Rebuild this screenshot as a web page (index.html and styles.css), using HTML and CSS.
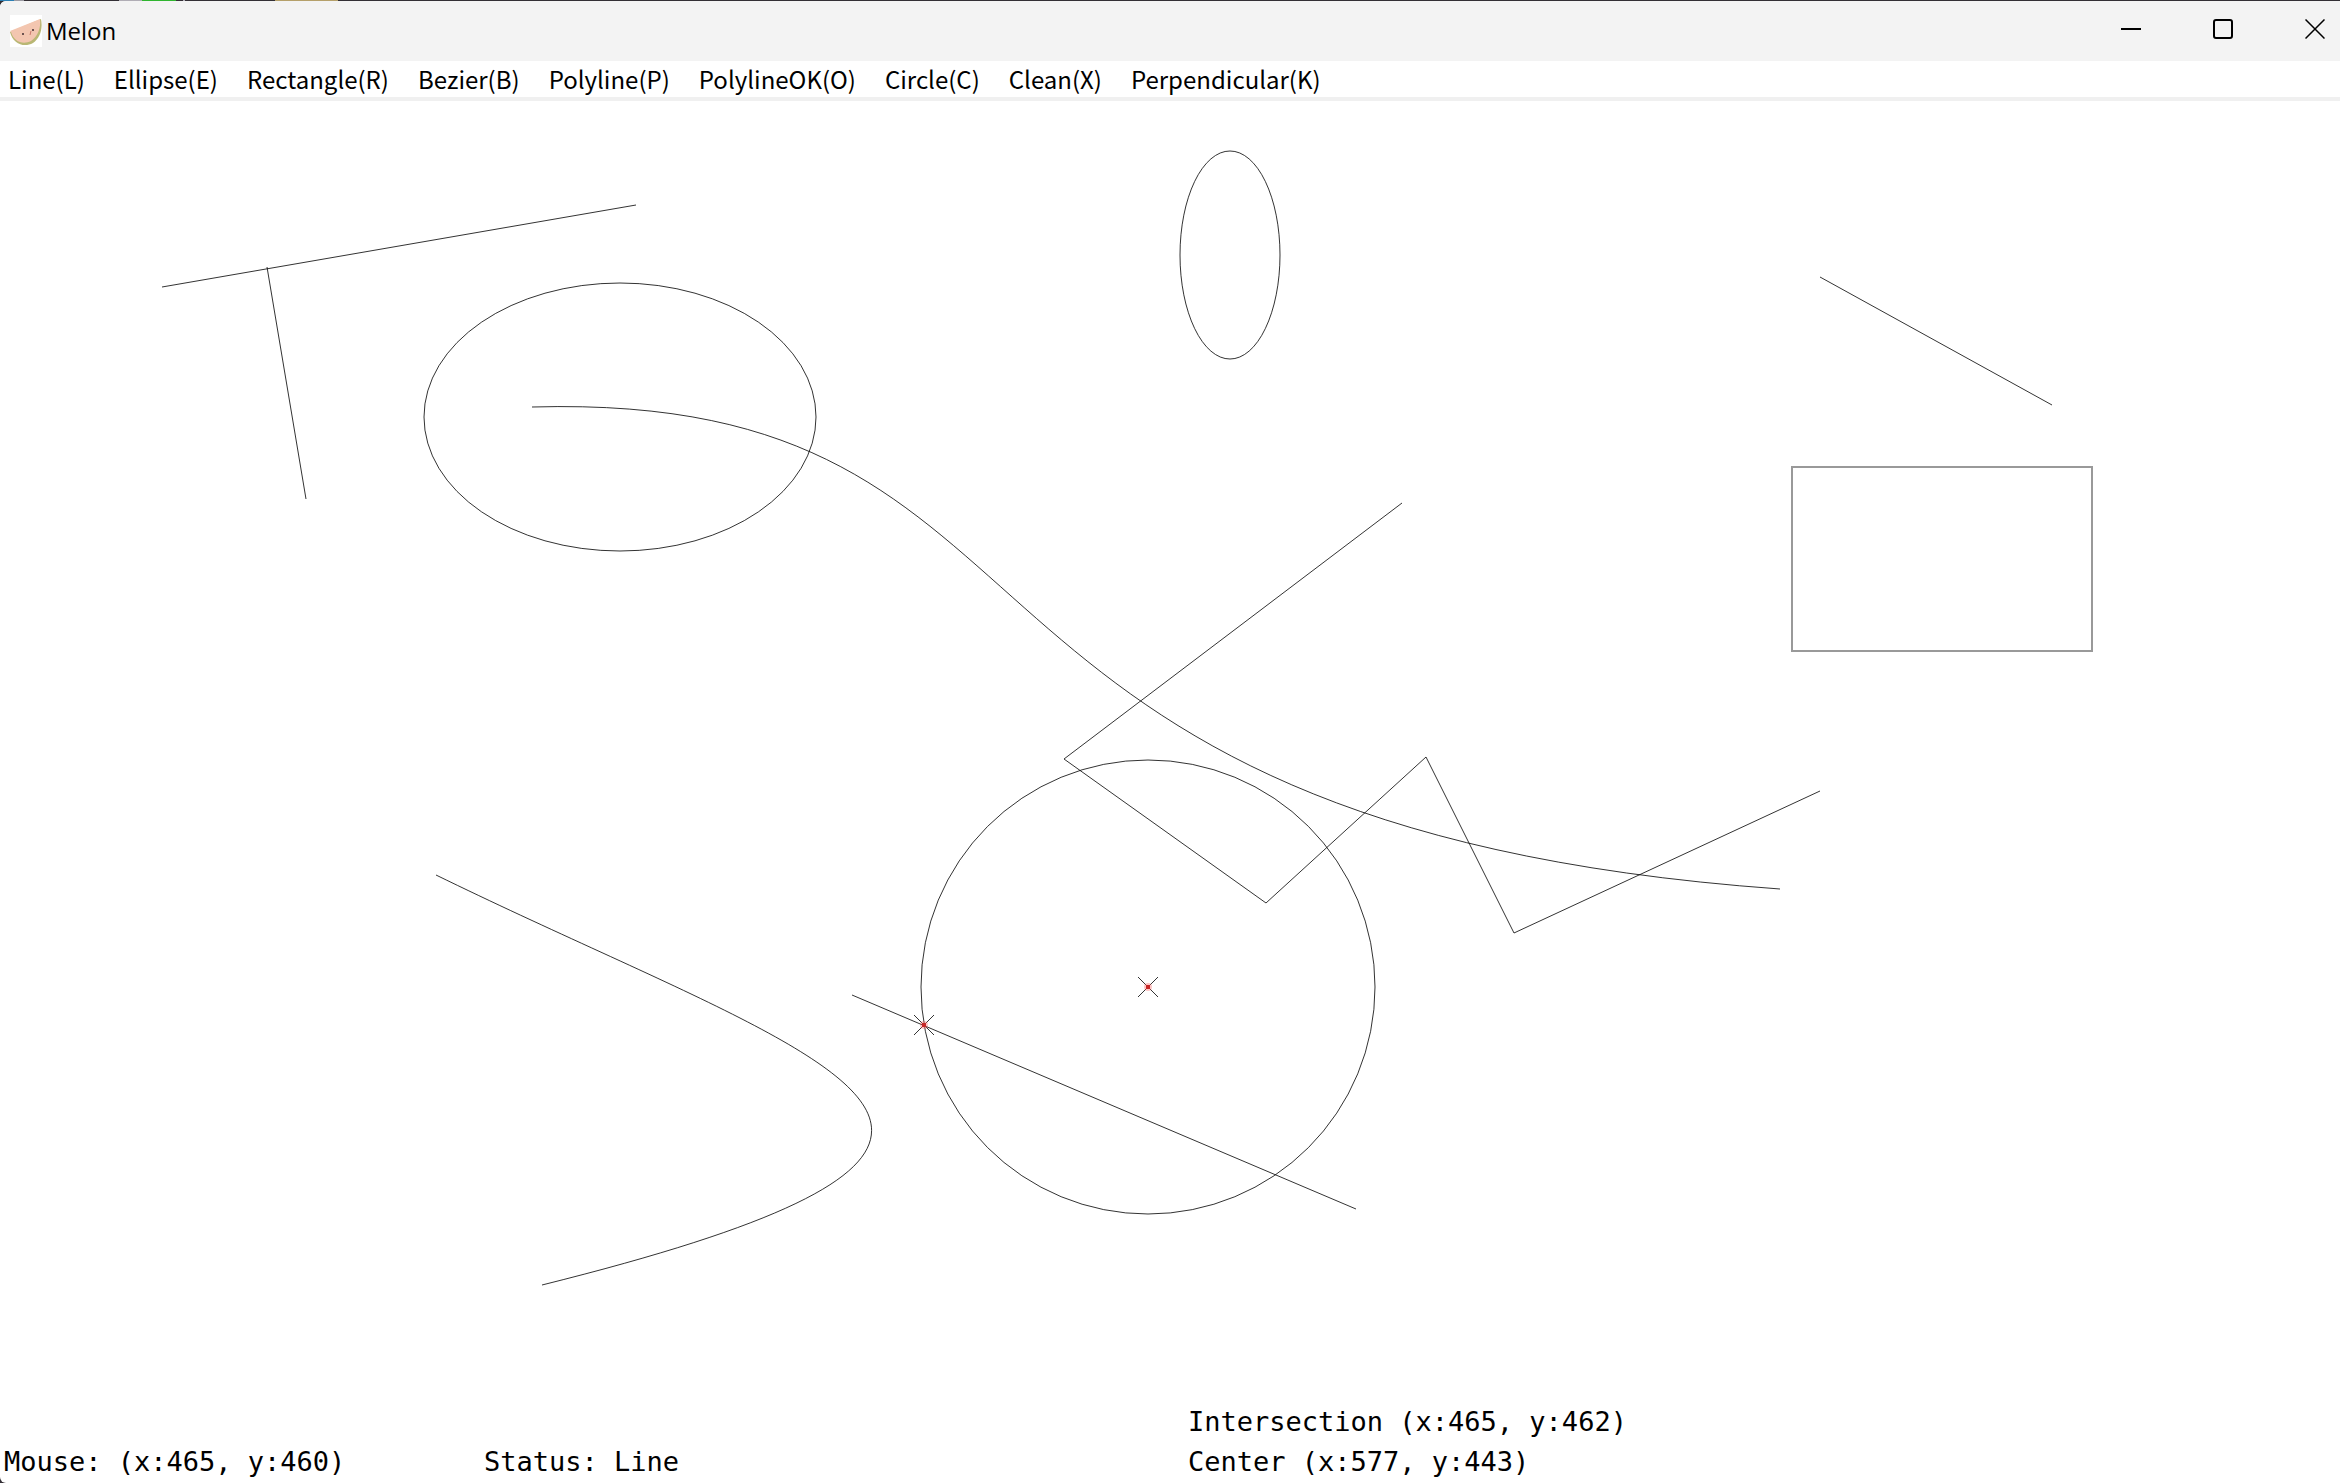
FILE: index.html
```html
<!DOCTYPE html>
<html lang="en">
<head>
<meta charset="utf-8">
<title>Melon</title>
<link rel="stylesheet" href="styles.css">
</head>
<body>
<div class="desktop-edge"></div>
<div class="window">
  <header class="titlebar">
    <svg class="app-icon" viewBox="0 0 32 32" aria-hidden="true">
      <rect width="32" height="32" fill="#fff"/>
      <path d="M0 17 L31 4 C33 14 30 23 23 28 C14 33 3 29 0 17Z" fill="#b9b774"/>
      <path d="M0 16 L30 4 C31 13 28 21 21 26 C13 30 4 27 1 17Z" fill="#f3c6b0"/>
      <path d="M12 18h2v2h-2zM22 14h2v2h-2z" fill="#6d5350"/>
      <path d="M20 20l1-4" stroke="#c9786b" fill="none"/>
    </svg>
    <h1 class="title">Melon</h1>
    <div class="controls">
      <button class="control" type="button" aria-label="Minimize"><svg viewBox="0 0 20 20"><path d="M0 10h20" stroke-width="2"/></svg></button>
      <button class="control" type="button" aria-label="Maximize"><svg viewBox="0 0 20 20"><rect x="1" y="1" width="18" height="18" rx="2" stroke-width="2"/></svg></button>
      <button class="control" type="button" aria-label="Close"><svg viewBox="0 0 20 20"><path d="M0.500 0.500l19 19M19.500 0.500l-19 19" stroke-width="1.500"/></svg></button>
    </div>
  </header>
  <nav class="menu" aria-label="Tools">
    <button class="menu-item" type="button">Line(L)</button>
    <button class="menu-item" type="button">Ellipse(E)</button>
    <button class="menu-item" type="button">Rectangle(R)</button>
    <button class="menu-item" type="button">Bezier(B)</button>
    <button class="menu-item" type="button">Polyline(P)</button>
    <button class="menu-item" type="button">PolylineOK(O)</button>
    <button class="menu-item" type="button">Circle(C)</button>
    <button class="menu-item" type="button">Clean(X)</button>
    <button class="menu-item" type="button">Perpendicular(K)</button>
  </nav>
  <main class="stage">
    <svg class="drawing" viewBox="0 101 2340 1301" role="img" aria-label="Drawing">
      <g class="shapes">
        <path d="M162 287L636 205"/>
        <path d="M267 267L306 499"/>
        <ellipse cx="620" cy="417" rx="196" ry="134"/>
        <ellipse cx="1230" cy="255" rx="50" ry="104"/>
        <path d="M1820 277L2052 405"/>
        <rect class="box" x="1792" y="467" width="300" height="184"/>
        <path d="M532 407C1096 391 897 826 1780 889"/>
        <path d="M1402 503L1064 759L1266 903L1426 757L1514 933L1820 791"/>
        <circle cx="1148" cy="987" r="227"/>
        <path d="M852 995L1356 1209"/>
        <path d="M436 875C819 1062 1136 1137 542 1285"/>
      </g>
      <g class="mark">
        <path d="M1138 977l20 20M1158 977l-20 20"/>
        <circle class="halo" cx="1148" cy="987" r="4"/>
        <rect x="1146" y="985" width="4" height="4"/>
      </g>
      <g class="mark">
        <path d="M914 1015l20 20M934 1015l-20 20"/>
        <circle class="halo" cx="924" cy="1025" r="4"/>
        <rect x="922" y="1023" width="4" height="4"/>
      </g>
    </svg>
  </main>
  <footer class="status">
    <output class="readout">Mouse: (x:465, y:460)</output>
    <output class="readout">Status: Line</output>
    <output class="readout">Intersection (x:465, y:462)<br>Center (x:577, y:443)</output>
  </footer>
</div>
</body>
</html>
```
FILE: styles.css
```css
* {
  box-sizing: border-box;
}

body {
  margin: 0;
  min-height: 100vh;
  display: flex;
  flex-direction: column;
  background: #332f35;
  color: #000;
  font-family: "Noto Sans CJK SC", "Noto Sans", sans-serif;
}

/* Sliver of the desktop that shows above the window */
.desktop-edge {
  height: 1px;
  background: linear-gradient(90deg,
    #2b7fb3 0 14px, #9a9aa2 14px 24px, #332f35 24px 119px,
    #b0adb5 119px 142px, #2fb52f 142px 176px, #332f35 176px 183px,
    #b0adb5 183px 185px, #332f35 185px 275px, #b5a06a 275px 338px,
    #332f35 338px);
}

.window {
  flex: 1;
  display: flex;
  flex-direction: column;
  background: #fff;
  border-radius: 6px 0 0 6px;
  overflow: hidden;
}

.titlebar {
  height: 60px;
  padding: 0 15px 0 10px;
  display: flex;
  align-items: center;
  background: #f3f3f3;
}

.app-icon {
  width: 32px;
  height: 32px;
}

.title {
  flex: 1;
  margin: 0;
  padding-left: 4px;
  font-family: "Open Sans", sans-serif;
  font-size: 24px;
  font-weight: 400;
  line-height: 32px;
}

.controls {
  display: flex;
  gap: 72px;
}

.control {
  width: 20px;
  height: 20px;
  margin-bottom: 4px;
  padding: 0;
  border: 0;
  background: none;
}

.control svg {
  display: block;
  fill: none;
  stroke: #000;
}

.menu {
  height: 40px;
  padding-left: 8px;
  display: flex;
  gap: 29px;
  border-bottom: 4px solid #f0f0f0;
}

.menu-item {
  padding: 0;
  border: 0;
  background: none;
  color: inherit;
  font: inherit;
  font-size: 24px;
  line-height: 36px;
}

.stage {
  flex: 1;
}

.drawing {
  display: block;
  width: 100%;
  height: auto;
}

.shapes > *,
.mark path {
  fill: none;
  stroke: rgba(0, 0, 0, 0.8);
  stroke-width: 1px;
}

.shapes > .box {
  stroke: rgba(0, 0, 0, 0.4);
  stroke-width: 2px;
}

.mark rect {
  fill: #c62828;
}

.mark .halo {
  fill: rgba(255, 90, 90, 0.35);
}

.status {
  padding: 0 4px 1px;
  display: grid;
  grid-template-columns: 480fr 704fr 1148fr;
  align-items: end;
  font-family: "DejaVu Sans Mono", monospace;
  font-size: 27px;
  line-height: 40px;
}

.readout {
  display: block;
}
```
